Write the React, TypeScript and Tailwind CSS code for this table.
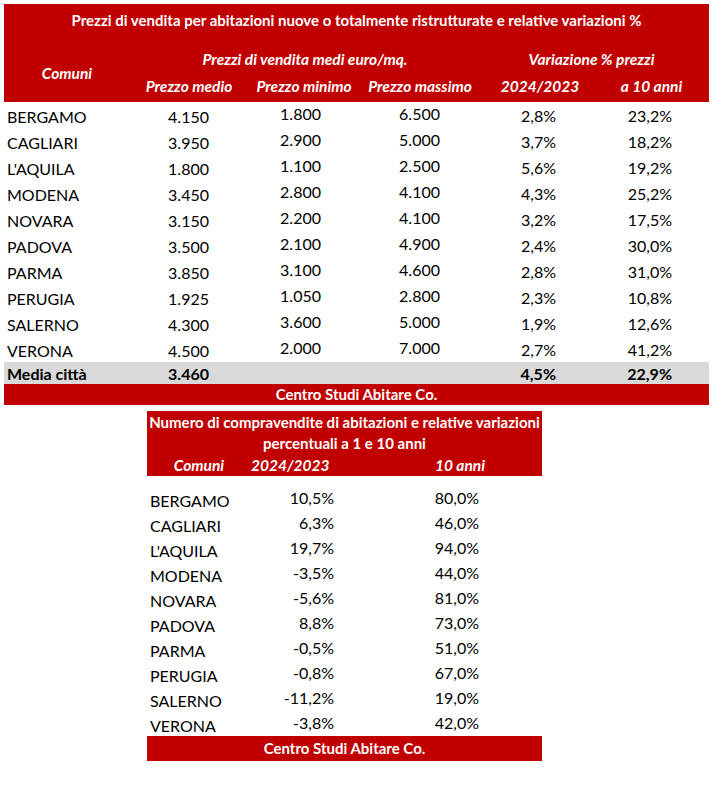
const prezzi = [
  ["BERGAMO", "4.150", "1.800", "6.500", "2,8%", "23,2%"],
  ["CAGLIARI", "3.950", "2.900", "5.000", "3,7%", "18,2%"],
  ["L'AQUILA", "1.800", "1.100", "2.500", "5,6%", "19,2%"],
  ["MODENA", "3.450", "2.800", "4.100", "4,3%", "25,2%"],
  ["NOVARA", "3.150", "2.200", "4.100", "3,2%", "17,5%"],
  ["PADOVA", "3.500", "2.100", "4.900", "2,4%", "30,0%"],
  ["PARMA", "3.850", "3.100", "4.600", "2,8%", "31,0%"],
  ["PERUGIA", "1.925", "1.050", "2.800", "2,3%", "10,8%"],
  ["SALERNO", "4.300", "3.600", "5.000", "1,9%", "12,6%"],
  ["VERONA", "4.500", "2.000", "7.000", "2,7%", "41,2%"],
];

const compravendite = [
  ["BERGAMO", "10,5%", "80,0%"],
  ["CAGLIARI", "6,3%", "46,0%"],
  ["L'AQUILA", "19,7%", "94,0%"],
  ["MODENA", "-3,5%", "44,0%"],
  ["NOVARA", "-5,6%", "81,0%"],
  ["PADOVA", "8,8%", "73,0%"],
  ["PARMA", "-0,5%", "51,0%"],
  ["PERUGIA", "-0,8%", "67,0%"],
  ["SALERNO", "-11,2%", "19,0%"],
  ["VERONA", "-3,8%", "42,0%"],
];

const cols1 = "grid grid-cols-[126px_118px_112px_120px_120px_109px]";

function TabellaPrezzi() {
  return (
    <div className="ml-[4px] mt-[4px] w-[705px]">
      <div className="bg-[#c00000] text-white">
        <div className="flex h-[32px] items-center justify-center text-[15px] font-bold">
          Prezzi di vendita per abitazioni nuove o totalmente ristrutturate e relative variazioni %
        </div>
        <div className={`${cols1} font-bold italic text-[15.5px]`}>
          <div className="row-span-2 flex items-center justify-center pt-[10px]">Comuni</div>
          <div className="col-span-3 flex h-[36px] items-center justify-center pt-[12px]">
            Prezzi di vendita medi euro/mq.
          </div>
          <div className="col-span-2 flex h-[36px] items-center justify-center pt-[12px] pr-[6px]">
            Variazione % prezzi
          </div>
          <div className="flex h-[30px] items-center justify-center">Prezzo medio</div>
          <div className="flex h-[30px] items-center justify-center">Prezzo minimo</div>
          <div className="flex h-[30px] items-center justify-center">Prezzo massimo</div>
          <div className="flex h-[30px] items-center justify-center">2024/2023</div>
          <div className="flex h-[30px] items-center justify-center pr-[6px]">a 10 anni</div>
        </div>
      </div>

      {prezzi.map(([citta, medio, min, max, anno, dieci]) => (
        <div key={citta} className={`${cols1} h-[26px] items-center text-[16px] text-black`}>
          <div className="pl-[3px]">{citta}</div>
          <div className="pr-[39px] text-right">{medio}</div>
          <div className="pb-[6px] pr-[39px] text-right">{min}</div>
          <div className="pb-[6px] pr-[40px] text-right">{max}</div>
          <div className="pb-[3px] pr-[44px] text-right">{anno}</div>
          <div className="pb-[3px] pr-[37px] text-right">{dieci}</div>
        </div>
      ))}

      <div className={`${cols1} h-[22px] items-center bg-[#d9d9d9] text-[16px] font-bold text-black`}>
        <div className="pl-[3px]">Media città</div>
        <div className="pr-[39px] text-right">3.460</div>
        <div />
        <div />
        <div className="pr-[44px] text-right">4,5%</div>
        <div className="pr-[37px] text-right">22,9%</div>
      </div>
      <div className="flex h-[21px] items-center justify-center bg-[#c00000] text-[15px] font-bold text-white">
        Centro Studi Abitare Co.
      </div>
    </div>
  );
}

function TabellaCompravendite() {
  return (
    <div className="ml-[147px] mt-[6px] w-[395px]">
      <div className="bg-[#c00000] text-white">
        <div className="pt-[1px] text-center text-[15px] font-bold leading-[21px]">
          Numero di compravendite di abitazioni e relative variazioni
          <br />
          percentuali a 1 e 10 anni
        </div>
        <div className="grid h-[22px] grid-cols-[104px_78px_49px_164px] items-center text-[15.5px] font-bold italic">
          <div className="text-center">Comuni</div>
          <div className="text-center">2024/2023</div>
          <div />
          <div className="text-center">10 anni</div>
        </div>
      </div>

      <div className="pt-[10px]">
        {compravendite.map(([citta, anno, dieci]) => (
          <div
            key={citta}
            className="grid h-[25px] grid-cols-[104px_83px_145px_63px] items-center text-[16px] text-black"
          >
            <div className="pl-[3px]">{citta}</div>
            <div className="pb-[6px] text-right">{anno}</div>
            <div className="pb-[6px] text-right">{dieci}</div>
            <div />
          </div>
        ))}
      </div>

      <div className="flex h-[25px] items-center justify-center bg-[#c00000] text-[15px] font-bold text-white">
        Centro Studi Abitare Co.
      </div>
    </div>
  );
}

export default function App() {
  return (
    <div className="min-h-[810px] w-[712px] bg-white font-['Lato','Open_Sans',sans-serif]">
      <TabellaPrezzi />
      <TabellaCompravendite />
    </div>
  );
}
